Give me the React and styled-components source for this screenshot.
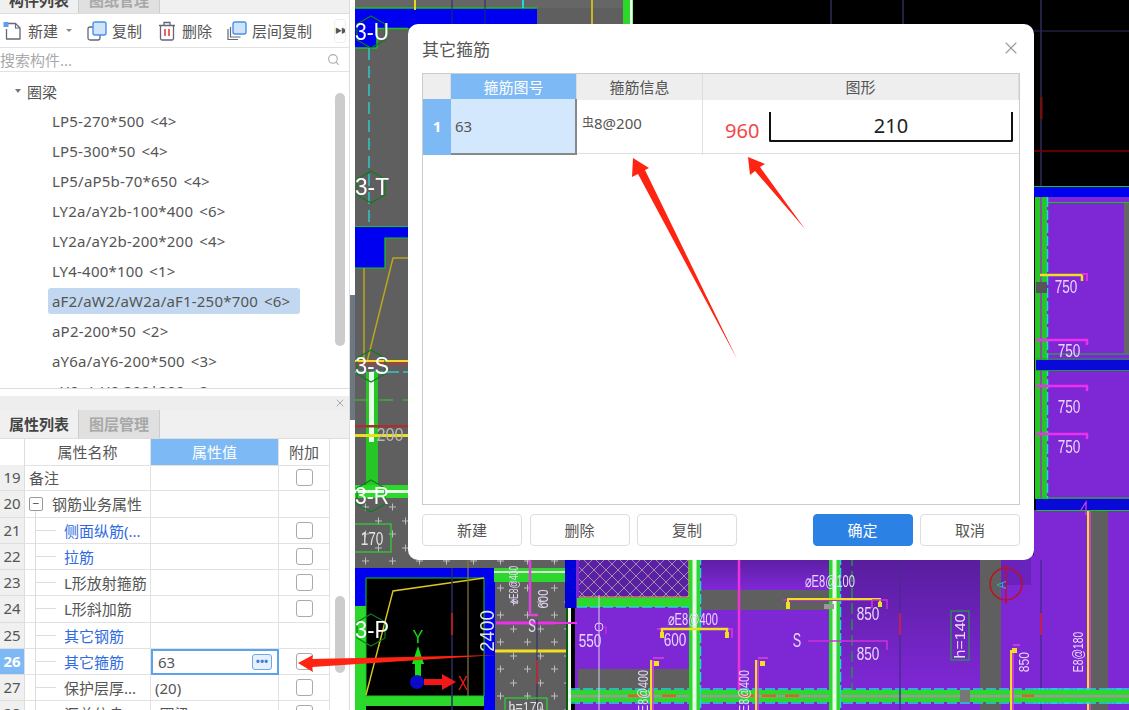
import React from 'react';
import styled, {createGlobalStyle} from 'styled-components';
import {Search, X} from 'lucide-react';

const GlobalStyle = createGlobalStyle`
  html, body {
    margin: 0;
    padding: 0;
    background: #fff;
    font-family: "Noto Sans", "Noto Sans CJK SC", sans-serif;
    color: #555;
  }
`

const Page = styled.div`
  position: relative;
  width: 1129px;
  height: 710px;
  overflow: hidden;
  display: flex;
`

const Sidebar = styled.div`
  width: 350px;
  flex: none;
  display: flex;
  flex-direction: column;
  border-right: 1px solid #ddd;
  box-sizing: border-box;
`

const Strip = styled.div`
  width: 5px;
  flex: none;
  background: #fff;
  padding-top: 295px;
  box-sizing: border-box;
`

const StripHandle = styled.div`
  height: 125px;
  background: #6d7882;
`

const TabBar = styled.div`
  display: flex;
  height: ${p => p.$clipped ? '28px' : '29px'};
  flex: none;
  background: #f0f0f0;
  border-bottom: 1px solid #ddd;
  box-sizing: border-box;
  margin-top: ${p => p.$clipped ? '-14px' : '0'};
`

const Tab = styled.div`
  width: ${p => p.$active ? '78px' : '82px'};
  text-align: center;
  font-size: 15px;
  line-height: 28px;
  font-weight: 700;
  color: ${p => p.$active ? '#444' : '#a8a8a8'};
  background: ${p => p.$active ? '#f0f0f0' : '#e0e0e0'};
  border-right: ${p => p.$active ? 'none' : '1px solid #ccc'};
  border-left: ${p => p.$active ? 'none' : '1px solid #ccc'};
  box-sizing: border-box;
`

const Toolbar = styled.div`
  height: 34px;
  flex: none;
  display: flex;
  align-items: center;
  gap: 15px;
  padding: 0 3px;
  border-bottom: 1px solid #e2e2e2;
  box-sizing: border-box;
`

const ToolItem = styled.div`
  display: flex;
  align-items: center;
  gap: 5px;
  font-size: 15px;
  color: #555;
`

const Caret = styled.span`
  width: 0;
  height: 0;
  margin-left: 3px;
  border-left: 3px solid transparent;
  border-right: 3px solid transparent;
  border-top: 3px solid #888;
`

const MoreButton = styled.div`
  margin-left: auto;
  width: 12px;
  height: 24px;
  background: #fff;
  border: 1px solid #eee;
  border-radius: 3px;
  font-size: 7px;
  line-height: 22px;
  text-align: center;
  letter-spacing: -1px;
  color: #555;
  box-sizing: border-box;
  overflow: hidden;
`

const SearchBar = styled.div`
  height: 24px;
  flex: none;
  display: flex;
  align-items: center;
  justify-content: space-between;
  padding: 0 9px 0 0;
  font-size: 15px;
  color: #aaa;
  border-bottom: 1px solid #e2e2e2;
  box-sizing: border-box;
`

const Tree = styled.div`
  position: relative;
  height: 317px;
  flex: none;
  padding-top: 4px;
  overflow: hidden;
  box-sizing: border-box;
  border-bottom: 1px solid #ddd;
`

const TreeRoot = styled.div`
  height: 30px;
  margin-bottom: 2px;
  display: flex;
  align-items: center;
  gap: 6px;
  padding-left: 15px;
  font-size: 15px;
  color: #555;
`

const TreeCaret = styled.span`
  width: 0;
  height: 0;
  border-left: 3.5px solid transparent;
  border-right: 3.5px solid transparent;
  border-top: 4px solid #777;
`

const TreeItem = styled.div`
  width: fit-content;
  min-width: ${p => p.$selected ? '244px' : '0'};
  height: 26px;
  line-height: 26px;
  margin: 0 0 4px 48px;
  padding: 0 4px;
  font-size: 15px;
  letter-spacing: 0.2px;
  white-space: nowrap;
  color: #555;
  border-radius: 3px;
  background: ${p => p.$selected ? '#c2d8f0' : 'transparent'};
`

const Count = styled.span`
  margin-left: 6px;
`

const ScrollThumb = styled.div`
  position: absolute;
  right: 4px;
  top: ${p => p.$top}px;
  width: 10px;
  height: ${p => p.$height}px;
  background: #ccc;
  border-radius: 5px;
`

const Splitter = styled.div`
  margin-top: 7px;
  height: 14px;
  flex: none;
  display: flex;
  align-items: center;
  justify-content: flex-end;
  padding-right: 3px;
  background: #eee;
  color: #aaa;
`

const PropPanel = styled.div`
  position: relative;
  flex: 1;
  overflow: hidden;
`

const PropRow = styled.div`
  display: grid;
  grid-template-columns: 25px 126px 128px 51px;
  height: ${p => p.$header ? '26px' : '26.25px'};
  box-sizing: border-box;
`

const NumCell = styled.div`
  background: ${p => p.$active ? '#7db9f5' : p.$header ? '#fff' : '#f0f0f0'};
  color: ${p => p.$active ? '#fff' : '#555'};
  font-weight: ${p => p.$active ? 700 : 400};
  font-size: 15px;
  line-height: 25px;
  text-align: center;
  border-right: 1px solid #ddd;
  border-bottom: 1px solid #ddd;
  box-sizing: border-box;
`

const NameCell = styled.div`
  position: relative;
  display: flex;
  align-items: center;
  font-size: 15px;
  white-space: nowrap;
  padding-left: ${p => p.$indent}px;
  color: ${p => p.$link ? '#2f6be0' : '#555'};
  border-right: 1px solid #e2e2e2;
  border-bottom: 1px solid #e2e2e2;
  box-sizing: border-box;
`

const HeadCell = styled.div`
  font-size: 15px;
  line-height: 26px;
  text-align: center;
  color: ${p => p.$active ? '#fff' : '#555'};
  background: ${p => p.$active ? '#7db9f5' : '#fff'};
  border-right: 1px solid #e2e2e2;
  border-bottom: 1px solid #e2e2e2;
  box-sizing: border-box;
`

const ValueCell = styled.div`
  display: flex;
  align-items: center;
  justify-content: space-between;
  font-size: 15px;
  padding: 0 ${p => p.$focused ? '5px' : '4px'};
  border-right: 1px solid #e2e2e2;
  border-bottom: 1px solid #e2e2e2;
  box-sizing: border-box;
  ${p => p.$focused && 'border: 2px solid #5ba3ef;'}
`

const DotsButton = styled.div`
  width: 20px;
  height: 16px;
  background: #e8f1fb;
  border: 1px solid #6aa9ec;
  border-radius: 3px;
  color: #3b82d6;
  font-size: 11px;
  font-weight: 700;
  line-height: 11px;
  text-align: center;
  box-sizing: border-box;
`

const CheckCell = styled.div`
  display: flex;
  align-items: center;
  justify-content: center;
  border-right: 1px solid #e2e2e2;
  border-bottom: 1px solid #e2e2e2;
  box-sizing: border-box;
`

const CheckBox = styled.span`
  width: 17px;
  height: 17px;
  border: 1px solid #aaa;
  border-radius: 3px;
  background: #fff;
  box-sizing: border-box;
`

const MinusBox = styled.span`
  width: 14px;
  height: 14px;
  margin-right: 9px;
  border: 1px solid #999;
  border-radius: 2px;
  box-sizing: border-box;
  font-size: 12px;
  line-height: 11px;
  text-align: center;
`

const GuideH = styled.span`
  position: absolute;
  left: 11px;
  top: 12px;
  width: 20px;
  border-top: 1px solid #ddd;
`

const GuideV = styled.span`
  position: absolute;
  left: 10px;
  top: ${p => p.$half ? '20px' : '-1px'};
  height: ${p => p.$half ? '6px' : '28px'};
  border-left: 1px solid #ddd;
`

const Canvas = styled.div`
  position: relative;
  flex: 1;
  background: #000;
  overflow: hidden;
`

const CadDrawing = styled.svg`
  display: block;
  width: 774px;
  height: 710px;
  filter: blur(0.4px);
  font-family: "Liberation Sans", sans-serif;
`

const Dialog = styled.div`
  position: absolute;
  left: 53px;
  top: 24px;
  width: 626px;
  height: 536px;
  padding: 0 14px;
  background: #fff;
  border-radius: 10px;
  box-sizing: border-box;
  display: flex;
  flex-direction: column;
`

const DialogHead = styled.div`
  height: 49px;
  padding-bottom: 1px;
  flex: none;
  display: flex;
  align-items: center;
  justify-content: space-between;
  font-size: 17px;
  color: #555;
  box-sizing: border-box;
`

const CloseIcon = styled(X)`
  color: #999;
  margin-right: -1px;
`

const BarTable = styled.div`
  height: 432px;
  flex: none;
  border: 1px solid #ccc;
  box-sizing: border-box;
`

const BarRow = styled.div`
  display: grid;
  grid-template-columns: 28px 126px 126px 1fr;
  height: ${p => p.$head ? '25px' : '55px'};
  border-bottom: 1px solid ${p => p.$head ? '#ccc' : '#e0e0e0'};
  box-sizing: border-box;
`

const BarHead = styled.div`
  font-size: 15px;
  line-height: 26px;
  text-align: center;
  color: ${p => p.$active ? '#fff' : '#555'};
  background: ${p => p.$active ? '#7db9f5' : '#eee'};
  border-right: 1px solid #ddd;
`

const BarIndex = styled.div`
  background: #7db9f5;
  color: #fff;
  font-size: 15px;
  font-weight: 700;
  line-height: 54px;
  text-align: center;
`

const BarNumber = styled.div`
  background: #d3e8fd;
  font-size: 15px;
  line-height: 54px;
  padding-left: 4px;
  border-right: 2px solid #888;
  border-bottom: 2px solid #888;
`

const BarInfo = styled.div`
  font-size: 15px;
  line-height: 48px;
  padding-left: 5px;
  border-right: 1px solid #e0e0e0;
`

const SteelMark = styled.span`
  font-size: 12px;
  position: relative;
  top: -2px;
`

const ShapeCell = styled.div`
  display: flex;
  align-items: center;
  padding-left: 22px;
`

const HookLength = styled.span`
  width: 44px;
  font-size: 20px;
  padding-top: 6px;
  color: #f44848;
`

const ShapeBar = styled.div`
  width: 244px;
  height: 30px;
  font-size: 20px;
  line-height: 27px;
  text-align: center;
  color: #222;
  border: 2px solid #111;
  border-top: none;
  border-radius: 0 0 2px 2px;
  box-sizing: border-box;
`

const ButtonRow = styled.div`
  margin-top: 9px;
  display: flex;
  gap: 7.5px;
`

const DialogButton = styled.div`
  width: 100px;
  height: 32px;
  margin-left: ${p => p.$push ? 'auto' : '0'};
  font-size: 15px;
  line-height: 31px;
  text-align: center;
  color: ${p => p.$primary ? '#fff' : '#555'};
  background: ${p => p.$primary ? '#2b82e4' : '#fff'};
  border: 1px solid ${p => p.$primary ? '#2b82e4' : '#ddd'};
  border-radius: 4px;
  box-sizing: border-box;
`

const ArrowLayer = styled.svg`
  position: absolute;
  left: 0;
  top: 0;
  width: 1129px;
  height: 710px;
  pointer-events: none;
`

const treeItems = [
  ['LP5-270*500', '<4>'],
  ['LP5-300*50', '<4>'],
  ['LP5/aP5b-70*650', '<4>'],
  ['LY2a/aY2b-100*400', '<6>'],
  ['LY2a/aY2b-200*200', '<4>'],
  ['LY4-400*100', '<1>'],
  ['aF2/aW2/aW2a/aF1-250*700', '<6>', true],
  ['aP2-200*50', '<2>'],
  ['aY6a/aY6-200*500', '<3>'],
  ['aY6a/aY6-200*200', '<2>'],
];

const propRows = [
  {num: 19, name: '备注', indent: 4, check: true},
  {num: 20, name: '钢筋业务属性', indent: 4, group: true},
  {num: 21, name: '侧面纵筋(...', link: true, indent: 39, check: true, guide: true},
  {num: 22, name: '拉筋', link: true, indent: 39, check: true, guide: true},
  {num: 23, name: 'L形放射箍筋', indent: 39, check: true, guide: true},
  {num: 24, name: 'L形斜加筋', indent: 39, check: true, guide: true},
  {num: 25, name: '其它钢筋', link: true, indent: 39, guide: true},
  {num: 26, name: '其它箍筋', link: true, indent: 39, check: true, guide: true, value: '63', active: true},
  {num: 27, name: '保护层厚...', indent: 39, check: true, guide: true, value: '(20)'},
  {num: 28, name: '汇总信息', indent: 39, check: true, guide: true, value: '(圈梁)'},
];

const NewIcon = () => (
  <svg width="20" height="20" viewBox="0 0 20 20" fill="none">
    <path d="M4 2.5h8.5l4.5 4.5v11H3.5V8" stroke="#667" strokeWidth="1.3" strokeLinejoin="round"/>
    <path d="M12.5 2.5V7H17" stroke="#667" strokeWidth="1.1"/>
    <rect x="0.5" y="1" width="5" height="5" fill="#5c9ff0"/>
  </svg>
);

const CopyIcon = () => (
  <svg width="20" height="20" viewBox="0 0 20 20" fill="none">
    <rect x="1" y="6" width="12" height="13" rx="2" stroke="#667" strokeWidth="1.3"/>
    <rect x="6" y="1" width="13" height="13" rx="2" fill="#cfe3fb" stroke="#4a90e8" strokeWidth="1.4"/>
  </svg>
);

const TrashIcon = () => (
  <svg width="20" height="20" viewBox="-1 0 20 20" fill="none">
    <path d="M1 4.5h16M6 4V1.5h6V4" stroke="#667" strokeWidth="1.3"/>
    <path d="M2.5 4.5V17.5a1.5 1.5 0 0 0 1.5 1.5h10a1.5 1.5 0 0 0 1.5-1.5V4.5" stroke="#667" strokeWidth="1.3"/>
    <path d="M7 8v7M11 8v7" stroke="#e5322d" strokeWidth="1.5"/>
  </svg>
);

const LayerCopyIcon = () => (
  <svg width="20" height="20" viewBox="0 0 20 20" fill="none">
    <path d="M1 8v10.5h10" stroke="#667" strokeWidth="1.2"/>
    <path d="M3.5 6v10h10" stroke="#667" strokeWidth="1.2"/>
    <rect x="6" y="1" width="13" height="12" rx="2" fill="#cfe3fb" stroke="#4a90e8" strokeWidth="1.4"/>
  </svg>
);

const hexPoints = (cx, cy) =>
  [[0, -16], [14, -8], [14, 8], [0, 16], [-14, 8], [-14, -8]].map(([x, y]) => `${cx + x},${cy + y}`).join(' ');

const AxisMark = ({y, label}) => (
  <g>
    <polygon points={hexPoints(371, y)} fill="none" stroke="#0b7d1a" strokeWidth="1.2"/>
    <text x="355" y={y + 8} fontSize="23" fill="#fff" textLength="34" lengthAdjust="spacingAndGlyphs">{label}</text>
  </g>
);

// CAD numbers are drawn very narrow, so each text is squeezed to a width per character
const Dim = ({x, y, rotate, size = 17, fill = '#e9d7fb', narrow = 0.42, children}) => (
  <text
    x={x}
    y={y}
    fontSize={size}
    fill={fill}
    textAnchor="middle"
    textLength={String(children).length * size * narrow}
    lengthAdjust="spacingAndGlyphs"
    transform={rotate ? `rotate(-90 ${x} ${y})` : undefined}
  >
    {children}
  </text>
);

const Bracket = ({x1, x2, y, stroke = '#e63ae6', drop = 8}) => (
  <path d={`M${x1} ${y}H${x2}V${y + drop}`} fill="none" stroke={stroke} strokeWidth="2"/>
);

// horizontal beam band used across the plan
const Band = ({x, y, width}) => (
  <g>
    <rect x={x} y={y} width={width} height="12" fill="#2bd82b"/>
    <line x1={x} x2={x + width} y1={y - 1} y2={y - 1} stroke="#1fd8d8" strokeWidth="1.5" strokeDasharray="10 3"/>
    <line x1={x} x2={x + width} y1={y + 13} y2={y + 13} stroke="#1fd8d8" strokeWidth="1.5" strokeDasharray="10 3"/>
    <rect x={x} y={y + 5} width={width} height="2.5" fill="#9a9a9a"/>
  </g>
);

const GreenColumn = ({x, y, height}) => (
  <g>
    <rect x={x} y={y} width="11" height={height} fill="#2bd82b"/>
    <rect x={x + 3.5} y={y} width="4" height={height} fill="#e8ffe8"/>
    <line x1={x + 11.5} x2={x + 11.5} y1={y} y2={y + height} stroke="#1fd8d8" strokeWidth="1.5" strokeDasharray="10 3"/>
  </g>
);

const CadPlan = () => (
  <CadDrawing viewBox="355 0 774 710">
    <defs>
      <pattern id="plus" width="27" height="27" patternUnits="userSpaceOnUse" patternTransform="translate(358 500)">
        <rect width="27" height="27" fill="#5f5f5f"/>
        <path d="M4 7h7M7.5 3.5v7M17 21h7M20.5 17.5v7" stroke="#bdbdbd" strokeWidth="1"/>
      </pattern>
      <pattern id="lattice" width="12" height="12" patternUnits="userSpaceOnUse">
        <rect width="12" height="12" fill="#5a1fa3"/>
        <path d="M0 0L12 12M12 0L0 12" stroke="#9a8fa8" strokeWidth="1"/>
      </pattern>
      <linearGradient id="purpleFade" x1="0" x2="0" y1="0" y2="1">
        <stop offset="0" stopColor="#571d9c"/>
        <stop offset="1" stopColor="#7f28d6"/>
      </linearGradient>
    </defs>

    <rect x="355" y="0" width="774" height="710" fill="#000"/>

    {/* top strip and left grey column */}
    <rect x="355" y="0" width="278" height="8" fill="#666"/>
    <rect x="355" y="8" width="270" height="200" fill="#5f5f5f"/>
    <rect x="623" y="0" width="10" height="30" fill="#2bd82b"/>
    <rect x="630" y="0" width="2.5" height="30" fill="#e8ffe8"/>
    <rect x="355" y="48" width="54" height="450" fill="#5f5f5f"/>
    <rect x="355" y="8" width="182" height="20" fill="#0000f0"/>
    <rect x="355" y="28" width="22" height="20" fill="#0000f0"/>
    <path d="M355 8H537M377 48V28.5H408" fill="none" stroke="#17c617" strokeWidth="1.5"/>
    <path d="M355 48H377" stroke="#17c617" strokeWidth="1.5"/>
    <rect x="414" y="0" width="2" height="10" fill="#e8d820"/>
    <rect x="591" y="0" width="2" height="25" fill="#c8b820"/>
    <rect x="522" y="0" width="2" height="8" fill="#1fd8d8"/>
    {[452, 485].map(x => <line key={x} x1={x} x2={x} y1="0" y2="24" stroke="#2a2a66" strokeWidth="1"/>)}
    {[831, 903, 1041].map(x => <line key={x} x1={x} x2={x} y1="0" y2="187" stroke="#2c2c58" strokeWidth="1.5"/>)}
    <line x1="369" x2="369" y1="48" y2="225" stroke="#2fc8c8" strokeWidth="1.5" strokeDasharray="12 6"/>

    <rect x="355" y="227" width="54" height="11" fill="#0000f0"/>
    <rect x="355" y="238" width="30" height="30" fill="#0000f0"/>
    <path d="M355 226.5H408M408 238H385V268H355" fill="none" stroke="#17c617" strokeWidth="1.2"/>
    <path d="M364 268V362M367 362L393 258H408" fill="none" stroke="#b5a81c" strokeWidth="1.5"/>

    <rect x="355" y="360" width="54" height="2" fill="#f0e020"/>
    <rect x="355" y="363" width="54" height="1.5" fill="#d03030"/>
    <line x1="355" x2="408" y1="372" y2="372" stroke="#2fc8c8" strokeWidth="1.5" strokeDasharray="12 4"/>
    <rect x="366" y="372" width="12" height="125" fill="#25c625"/>
    <rect x="369" y="372" width="5" height="70" fill="#e8ffe8"/>
    <path d="M355 400H408" stroke="#2bd82b" strokeWidth="1.2" strokeDasharray="14 10"/>
    <rect x="355" y="425" width="54" height="2.5" fill="#a83030"/>
    <rect x="355" y="434" width="54" height="3" fill="#e8e020"/>
    <Dim x="390" y="441" size="18" fill="#bbb" narrow={0.5}>200</Dim>
    <rect x="355" y="485" width="54" height="13" fill="#2bd82b"/>
    <rect x="355" y="490" width="54" height="3" fill="#e8ffe8"/>

    {/* dotted slab */}
    <rect x="355" y="498" width="54" height="70" fill="url(#plus)"/>
    <rect x="405" y="555" width="230" height="15" fill="url(#plus)"/>
    <rect x="494" y="568" width="72" height="142" fill="url(#plus)"/>
    <rect x="351" y="524" width="40" height="28" fill="none" stroke="#2bd82b" strokeWidth="1.2"/>
    <Dim x="372" y="545" size="18" fill="#e4e4e4">170</Dim>

    {/* axis marks */}
    <AxisMark y={32} label="3-U"/>
    <AxisMark y={187} label="3-T"/>
    <AxisMark y={366} label="3-S"/>
    <AxisMark y={496} label="3-R"/>

    {/* black room with coordinate arrows */}
    <rect x="355" y="568" width="140" height="142" fill="#0000f0"/>
    <rect x="355" y="606" width="12" height="104" fill="#2bd82b"/>
    <rect x="366" y="578" width="118" height="118" fill="#000"/>
    <rect x="366" y="696" width="118" height="10" fill="#2bd82b"/>
    <rect x="366" y="706" width="118" height="4" fill="#000"/>
    <path d="M366 578H484V696H366Z" fill="none" stroke="#17c617" strokeWidth="1"/>
    <path d="M366 695L393 591L484 578" fill="none" stroke="#d8c81c" strokeWidth="1.4"/>
    <line x1="452" x2="452" y1="568" y2="710" stroke="#2c2c62" strokeWidth="1.5"/>
    <line x1="468" x2="468" y1="560" y2="696" stroke="#8a7a44" strokeWidth="1.2"/>
    <rect x="451" y="613" width="2" height="22" fill="#a82020"/>
    <Dim x="494" y="631" size="20" rotate fill="#e4e4e4" narrow={0.52}>2400</Dim>
    <AxisMark y={630} label="3-P"/>
    <polygon points="418,646 412,664 415,664 415,678 421,678 421,664 424,664" fill="#16e016"/>
    <Dim x="418" y="643" size="18" fill="#16e016" narrow={0.6}>Y</Dim>
    <rect x="424" y="679" width="18" height="6" fill="#f01818"/>
    <polygon points="442,674 456,682 442,690" fill="#f01818"/>
    <circle cx="417" cy="682" r="7" fill="#0a0ac8"/>
    <Dim x="463" y="690" size="20" fill="#f01818" narrow={0.5}>X</Dim>

    {/* grey slab right of room */}
    <rect x="494" y="568" width="72" height="14" fill="#2bd82b"/>
    <rect x="494" y="571" width="72" height="2" fill="#ddd"/>
    <line x1="530" x2="530" y1="560" y2="615" stroke="#e040e0" strokeWidth="2.5"/>
    <line x1="530" x2="538" y1="615" y2="615" stroke="#e040e0" strokeWidth="2.5"/>
    <line x1="496" x2="555" y1="623" y2="623" stroke="#ee30ee" strokeWidth="3"/>
    <line x1="495" x2="566" y1="651" y2="651" stroke="#f0e020" strokeWidth="3"/>
    <line x1="537" x2="537" y1="620" y2="710" stroke="#2c2c62" strokeWidth="1"/>
    <rect x="536" y="660" width="2" height="24" fill="#a83030"/>
    <Dim x="532" y="632" size="18">S</Dim>
    <Dim x="548" y="599" size="15" rotate>600</Dim>
    <Dim x="518" y="585" size="13" rotate>⌀E8@400</Dim>
    <rect x="505" y="698" width="42" height="20" fill="none" stroke="#2bd82b" strokeWidth="1.2"/>
    <Dim x="526" y="712" size="14" fill="#e4e4e4" narrow={0.5}>h=170</Dim>

    {/* purple plan */}
    <rect x="575" y="555" width="554" height="155" fill="#7d28d4"/>
    <rect x="565" y="555" width="11" height="53" fill="#0000d8"/>
    <rect x="579" y="555" width="110" height="42" fill="url(#lattice)"/>
    <path d="M579 597H689V555" fill="none" stroke="#d8c81c" strokeWidth="1.2"/>
    <rect x="577" y="598" width="113" height="9" fill="#2bd82b"/>
    <rect x="578" y="669" width="112" height="21" fill="#5f5f5f"/>
    <rect x="700" y="555" width="130" height="35" fill="url(#purpleFade)"/>
    <rect x="700" y="590" width="130" height="20" fill="#5f5f5f"/>
    <rect x="841" y="555" width="139" height="135" fill="url(#purpleFade)"/>
    <rect x="980" y="555" width="21" height="155" fill="#5f5f5f"/>
    <rect x="1001" y="555" width="30" height="30" fill="#6a22bc"/>

    <Band x={570} y={690} width={559}/>
    <rect x="566" y="608" width="5" height="102" fill="#0d5a0d"/>
    <rect x="568" y="608" width="3" height="102" fill="#e8ffe8"/>
    <path d="M577 607H689" stroke="#1fd8d8" strokeWidth="1.5" strokeDasharray="10 3"/>
    <GreenColumn x={689} y={555} height={155}/>
    <GreenColumn x={829} y={555} height={155}/>
    <line x1="852" x2="852" y1="555" y2="690" stroke="#1a9a3a" strokeWidth="1.5" strokeDasharray="11 5"/>
    <line x1="739" x2="739" y1="555" y2="690" stroke="#f030d8" strokeWidth="2.5"/>
    {[900, 1041].map(x => <line key={x} x1={x} x2={x} y1="555" y2="710" stroke="#4b2a96" strokeWidth="1.5"/>)}
    <rect x="899" y="613" width="2" height="22" fill="#c02050"/>
    <rect x="1040" y="613" width="2" height="22" fill="#c02050"/>
    {[628, 662, 740, 762, 785, 1022, 1045].map(x => <rect key={x} x={x} y="694.5" width="14" height="2.5" fill="#e0602c"/>)}
    <rect x="960" y="690" width="10" height="12" fill="#777"/>

    {/* beam marks */}
    <Dim x="693" y="625" size="17">⌀E8@400</Dim>
    <Bracket x1={657} x2={732} y={629} stroke="#d030d8" drop={9}/>
    <path d="M662 632V629H727V632" fill="none" stroke="#f0e020" strokeWidth="2.5"/>
    <rect x="660" y="632" width="4" height="6" fill="#f0e020"/>
    <rect x="725" y="632" width="4" height="6" fill="#f0e020"/>
    <Dim x="675" y="646" size="18">600</Dim>
    <Dim x="590" y="647" size="18">550</Dim>
    <circle cx="599" cy="627" r="4" fill="none" stroke="#e9d7fb" strokeWidth="1"/>
    <line x1="599" x2="599" y1="595" y2="710" stroke="#dcd0ee" strokeWidth="1"/>
    <path d="M603 627H606V634" fill="none" stroke="#d030d8" strokeWidth="1.2"/>
    <path d="M555 623H577" stroke="#ee30ee" strokeWidth="2"/>

    <Dim x="830" y="587" size="17">⌀E8@100</Dim>
    <Bracket x1={783} x2={872} y={600} stroke="#c030d0" drop={8}/>
    <path d="M788 603V599H880V604" fill="none" stroke="#f0e020" strokeWidth="2"/>
    <rect x="786" y="602" width="4" height="7" fill="#f0e020"/>
    <rect x="878" y="602" width="4" height="5" fill="#f0e020"/>
    <path d="M872 600H887V609" fill="none" stroke="#d030d8" strokeWidth="1.5"/>
    <rect x="824" y="604" width="10" height="5" fill="#999"/>
    <Dim x="868" y="620" size="18">850</Dim>
    <Dim x="868" y="660" size="18">850</Dim>
    <Dim x="797" y="647" size="20">S</Dim>
    <path d="M808 641H887V650" fill="none" stroke="#d030d8" strokeWidth="1.5"/>

    <rect x="951" y="611" width="18" height="49" fill="none" stroke="#20a040" strokeWidth="1.2"/>
    <Dim x="965" y="636" size="15" rotate narrow={0.6}>h=140</Dim>
    <circle cx="1006" cy="584" r="16" fill="none" stroke="#c01020" strokeWidth="1.5"/>
    <line x1="1006" x2="1006" y1="565" y2="604" stroke="#c01020" strokeWidth="1.5"/>
    <text x="1001" y="590" fontSize="12" fill="#20b8b8" textAnchor="middle" transform="rotate(-90 1001 585)">A</text>
    <Dim x="1029" y="662" size="15" rotate narrow={0.45}>850</Dim>
    <Dim x="1083" y="652" size="15" rotate narrow={0.45}>E8@180</Dim>
    <path d="M1011 710V650" stroke="#f0e020" strokeWidth="2"/>
    <path d="M1013 710V650M1013 645H1020" fill="none" stroke="#e040e0" strokeWidth="1.5"/>
    <rect x="1012" y="648" width="5" height="5" fill="#f0e020"/>
    <path d="M651 660V710" stroke="#f0e020" strokeWidth="2"/>
    <path d="M653 660V710M653 658H664" fill="none" stroke="#e040e0" strokeWidth="1.5"/>
    <rect x="654" y="661" width="5" height="5" fill="#f0e020"/>
    <path d="M756 660V710" stroke="#f0e020" strokeWidth="2"/>
    <path d="M758 660V710M758 658H768" fill="none" stroke="#e040e0" strokeWidth="1.5"/>
    <rect x="760" y="661" width="5" height="5" fill="#f0e020"/>
    <Dim x="648" y="691" size="14" rotate narrow={0.5}>E8@400</Dim>
    <Dim x="749" y="691" size="14" rotate narrow={0.5}>E8@400</Dim>

    {/* right column of the plan */}
    <line x1="1034" x2="1129" y1="151" y2="151" stroke="#800000" strokeWidth="1.5"/>
    <line x1="1034" x2="1129" y1="31" y2="31" stroke="#2c2c58" strokeWidth="1"/>
    <rect x="1040" y="97" width="2.5" height="22" fill="#701010"/>
    <rect x="1034" y="187" width="95" height="10" fill="#0000f0"/>
    <rect x="1034" y="186" width="95" height="1" fill="#17c617"/>
    <rect x="1047" y="197" width="82" height="305" fill="#7d28d4"/>
    <rect x="1124" y="203" width="5" height="150" fill="#666"/>
    <path d="M1047 202.5H1129M1047 354H1129" stroke="#17c617" strokeWidth="1.2"/>
    <rect x="1035" y="197" width="12" height="302" fill="#25c625"/>
    <rect x="1040" y="197" width="2" height="302" fill="#7a5a9a"/>
    <line x1="1047.5" x2="1047.5" y1="197" y2="499" stroke="#1fd8d8" strokeWidth="1.5" strokeDasharray="10 3"/>
    <rect x="1036" y="360" width="93" height="10" fill="#0a0ad8"/>
    <path d="M1036 359H1129M1036 370.5H1129" stroke="#1a9a3a" strokeWidth="1"/>
    <path d="M1040 275H1082V281" fill="none" stroke="#f0e020" strokeWidth="2.5"/>
    <path d="M1082 274H1087V281" fill="none" stroke="#e030e0" strokeWidth="2"/>
    <path d="M1036 340H1087V345M1036 386H1087V391M1036 434H1087V439" fill="none" stroke="#ee30ee" strokeWidth="2.5"/>
    <rect x="1036" y="282" width="11" height="11" fill="#555"/>
    <Dim x="1066" y="293" size="18">750</Dim>
    <Dim x="1069" y="357" size="18">750</Dim>
    <Dim x="1069" y="413" size="18">750</Dim>
    <Dim x="1069" y="453" size="18">750</Dim>
    <rect x="1034" y="510" width="95" height="50" fill="#7d28d4"/>
    <rect x="1090" y="510" width="18" height="200" fill="#5f5f5f"/>
    <line x1="1088" x2="1088" y1="510" y2="710" stroke="#f0e020" strokeWidth="2"/>
    <line x1="1090" x2="1090" y1="510" y2="710" stroke="#e040e0" strokeWidth="1.5"/>
    <rect x="1036" y="499" width="93" height="11" fill="#0a0ad8"/>
    <path d="M1036 498H1129M1036 510.5H1129" stroke="#17c617" strokeWidth="1"/>
    <path d="M1081 510L1086 502V515" fill="none" stroke="#e040e0" strokeWidth="1.2"/>
    <Band x={1034} y={690} width={95}/>
  </CadDrawing>
);

const RedArrows = () => (
  <ArrowLayer viewBox="0 0 1129 710">
    <polygon points="633,158 632,177 638,174 737,359 645,170 649,168" fill="#ff2312"/>
    <polygon points="748,157 750,175 755,171 805,229 760,167 765,164" fill="#ff2312"/>
    <polygon points="298,663 313,655 312,659 497,655 312,667 313,672" fill="#ff2312"/>
  </ArrowLayer>
);

export default function App() {
  return (
    <Page>
      <GlobalStyle/>
      <Sidebar>
        <TabBar $clipped>
          <Tab $active>构件列表</Tab>
          <Tab>图纸管理</Tab>
        </TabBar>
        <Toolbar>
          <ToolItem><NewIcon/>新建<Caret/></ToolItem>
          <ToolItem><CopyIcon/>复制</ToolItem>
          <ToolItem><TrashIcon/>删除</ToolItem>
          <ToolItem><LayerCopyIcon/>层间复制</ToolItem>
          <MoreButton>▶▶</MoreButton>
        </Toolbar>
        <SearchBar>
          搜索构件...
          <Search size={13} color="#aaa"/>
        </SearchBar>
        <Tree>
          <TreeRoot><TreeCaret/>圈梁</TreeRoot>
          {treeItems.map(([name, count, selected]) => (
            <TreeItem key={name} $selected={selected}>
              {name}<Count>{count}</Count>
            </TreeItem>
          ))}
          <ScrollThumb $top={21} $height={253}/>
        </Tree>
        <Splitter><X size={12}/></Splitter>
        <TabBar>
          <Tab $active>属性列表</Tab>
          <Tab>图层管理</Tab>
        </TabBar>
        <PropPanel>
          <PropRow $header>
            <NumCell $header/>
            <HeadCell>属性名称</HeadCell>
            <HeadCell $active>属性值</HeadCell>
            <HeadCell>附加</HeadCell>
          </PropRow>
          {propRows.map(row => (
            <PropRow key={row.num}>
              <NumCell $active={row.active}>{row.num}</NumCell>
              <NameCell $indent={row.indent} $link={row.link}>
                {row.guide && <GuideV/>}
                {row.guide && <GuideH/>}
                {row.group && <GuideV $half/>}
                {row.group && <MinusBox>−</MinusBox>}
                {row.name}
              </NameCell>
              <ValueCell $focused={row.active}>
                {row.value}
                {row.active && <DotsButton>•••</DotsButton>}
              </ValueCell>
              <CheckCell>{row.check && <CheckBox/>}</CheckCell>
            </PropRow>
          ))}
          <ScrollThumb $top={157} $height={77}/>
        </PropPanel>
      </Sidebar>
      <Strip><StripHandle/></Strip>
      <Canvas>
        <CadPlan/>
        <Dialog>
          <DialogHead>
            其它箍筋
            <CloseIcon size={20} strokeWidth={1.3}/>
          </DialogHead>
          <BarTable>
            <BarRow $head>
              <BarHead/>
              <BarHead $active>箍筋图号</BarHead>
              <BarHead>箍筋信息</BarHead>
              <BarHead>图形</BarHead>
            </BarRow>
            <BarRow>
              <BarIndex>1</BarIndex>
              <BarNumber>63</BarNumber>
              <BarInfo><SteelMark>虫</SteelMark>8@200</BarInfo>
              <ShapeCell>
                <HookLength>960</HookLength>
                <ShapeBar>210</ShapeBar>
              </ShapeCell>
            </BarRow>
          </BarTable>
          <ButtonRow>
            <DialogButton>新建</DialogButton>
            <DialogButton>删除</DialogButton>
            <DialogButton>复制</DialogButton>
            <DialogButton $push $primary>确定</DialogButton>
            <DialogButton>取消</DialogButton>
          </ButtonRow>
        </Dialog>
      </Canvas>
      <RedArrows/>
    </Page>
  );
}
